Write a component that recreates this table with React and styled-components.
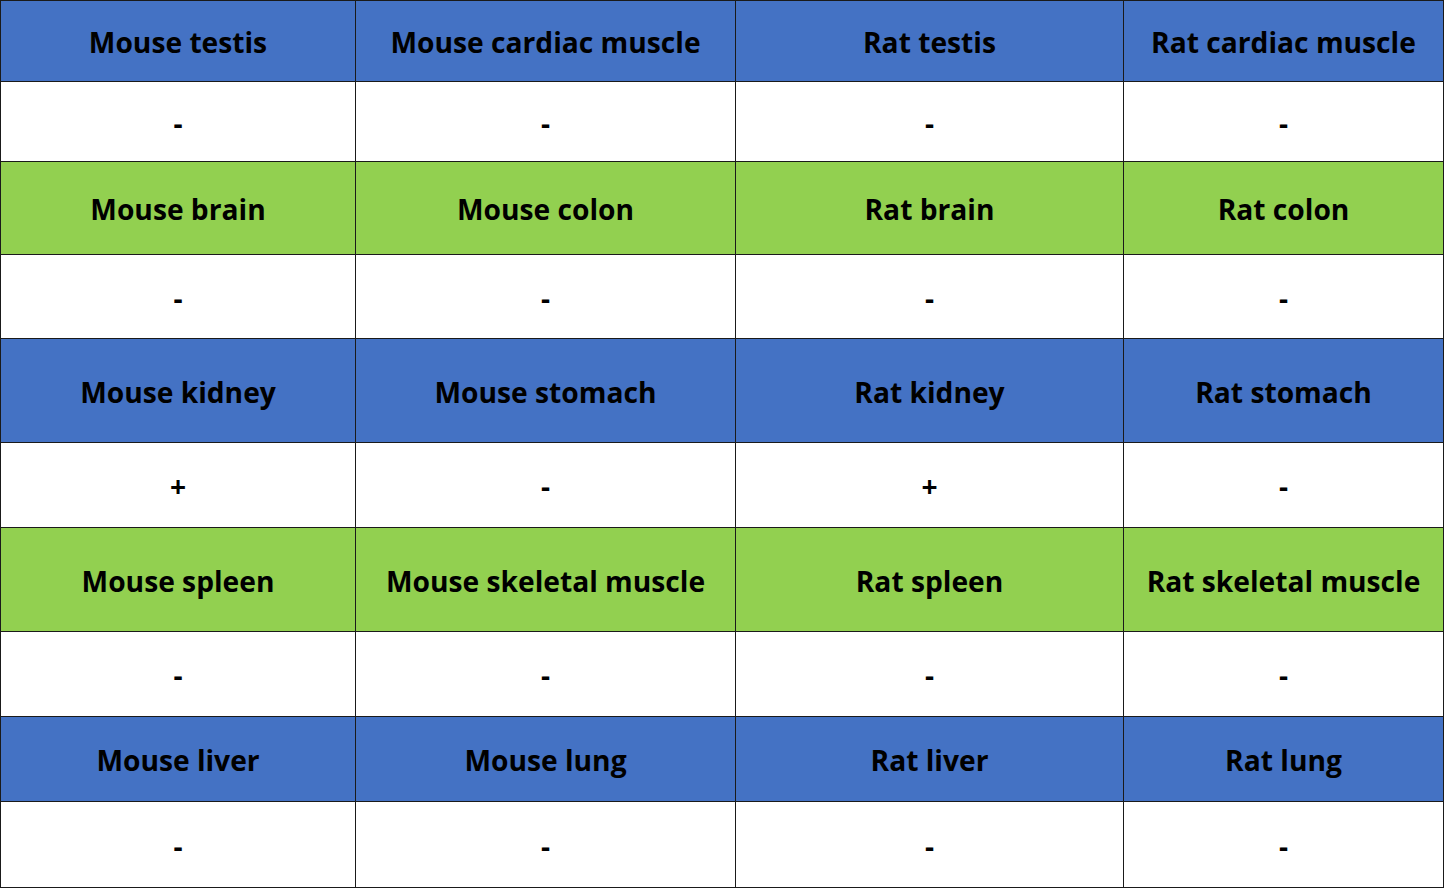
import React from "react";
import styled, { createGlobalStyle } from "styled-components";

const Global = createGlobalStyle`
  html, body { margin: 0; padding: 0; background: #ffffff; }
  body { font-family: "Open Sans", "Liberation Sans", sans-serif; }
`;

const Grid = styled.div`
  display: grid;
  grid-template-columns: 354px 379px 387px 319px;
  grid-template-rows: 80px 79px 92px 83px 103px 84px 103px 84px 84px 85px;
  gap: 1px;
  padding: 1px;
  width: max-content;
  background: #1a1a1a;
`;

const Cell = styled.div`
  display: flex;
  align-items: center;
  justify-content: center;
  padding-top: 2px;
  box-sizing: border-box;
  background: ${(p) => (p.$tone === "blue" ? "#4472c4" : p.$tone === "green" ? "#92d050" : "#ffffff")};
  color: #000000;
  font-family: "Open Sans", "Liberation Sans", sans-serif;
  font-weight: 700;
  font-size: 28.2px;
  white-space: nowrap;
`;

const groups = [
  { tone: "blue", names: ["Mouse testis", "Mouse cardiac muscle", "Rat testis", "Rat cardiac muscle"], vals: ["-", "-", "-", "-"] },
  { tone: "green", names: ["Mouse brain", "Mouse colon", "Rat brain", "Rat colon"], vals: ["-", "-", "-", "-"] },
  { tone: "blue", names: ["Mouse kidney", "Mouse stomach", "Rat kidney", "Rat stomach"], vals: ["+", "-", "+", "-"] },
  { tone: "green", names: ["Mouse spleen", "Mouse skeletal muscle", "Rat spleen", "Rat skeletal muscle"], vals: ["-", "-", "-", "-"] },
  { tone: "blue", names: ["Mouse liver", "Mouse lung", "Rat liver", "Rat lung"], vals: ["-", "-", "-", "-"] },
];

export default function App() {
  return (
    <>
      <Global />
      <Grid>
        {groups.map((g, gi) => (
          <React.Fragment key={gi}>
            {g.names.map((n) => (
              <Cell key={n} $tone={g.tone}>{n}</Cell>
            ))}
            {g.vals.map((v, i) => (
              <Cell key={`${gi}-${i}`} $tone="white">{v}</Cell>
            ))}
          </React.Fragment>
        ))}
      </Grid>
    </>
  );
}
